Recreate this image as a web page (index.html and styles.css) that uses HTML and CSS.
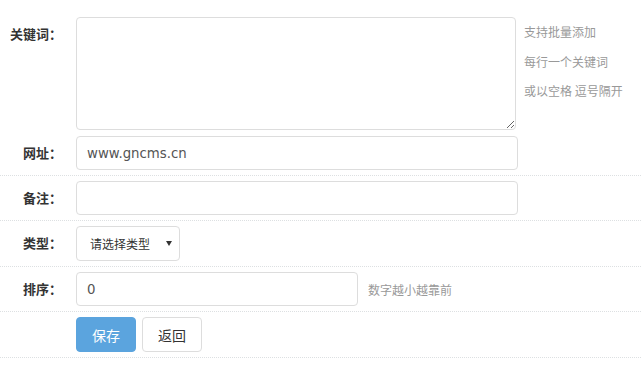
FILE: index.html
```html
<!DOCTYPE html>
<html lang="zh-CN">
<head>
  <meta charset="UTF-8">
  <title>添加关键词</title>
  <link rel="stylesheet" href="styles.css">
</head>
<body>
  <form class="form">
    <div class="row row-first">
      <label class="row-label">关键词：</label>
      <textarea class="field field-area"></textarea>
      <div class="help help-list">
        <p>支持批量添加</p>
        <p>每行一个关键词</p>
        <p>或以空格 逗号隔开</p>
      </div>
    </div>

    <div class="row">
      <label class="row-label">网址：</label>
      <input type="text" class="field field-wide" value="www.gncms.cn">
    </div>

    <div class="row">
      <label class="row-label">备注：</label>
      <input type="text" class="field field-wide">
    </div>

    <div class="row">
      <label class="row-label">类型：</label>
      <div class="select-box">
        <select class="field field-select">
          <option>请选择类型</option>
          <option>网站</option>
          <option>栏目</option>
        </select>
      </div>
    </div>

    <div class="row">
      <label class="row-label">排序：</label>
      <input type="text" class="field field-short" value="0">
      <span class="help">数字越小越靠前</span>
    </div>

    <div class="row">
      <span class="row-label"></span>
      <div class="actions">
        <button type="button" class="btn btn-primary">保存</button>
        <button type="button" class="btn btn-default">返回</button>
      </div>
    </div>
  </form>
</body>
</html>
```

FILE: styles.css
```css
body {
  margin: 0;
  padding: 0;
  background: #fff;
  font-family: "DejaVu Sans", "Noto Sans CJK SC", sans-serif;
  font-size: 13px;
  color: #333;
}
.form {
  margin: 0;
}
.row {
  display: flex;
  align-items: center;
  padding: 5px 0;
  border-bottom: 1px dotted #dde0e2;
}
.row-first {
  align-items: flex-start;
  padding: 17px 0 1px;
  border-bottom: none;
}
.row-label {
  flex: 0 0 62px;
  margin-right: 14px;
  text-align: right;
  font-family: "Noto Sans CJK SC", sans-serif;
  font-weight: bold;
  font-size: 13px;
  line-height: 30px;
  color: #333;
  align-self: flex-start;
  padding-top: 2px;
}
.field {
  box-sizing: border-box;
  height: 34px;
  padding: 0 10px;
  border: 1px solid #ddd;
  border-radius: 4px;
  background: #fff;
  font-family: "DejaVu Sans", "Noto Sans CJK SC", sans-serif;
  font-size: 13.3px;
  color: #555;
  outline: none;
}
.field-area {
  width: 440px;
  height: 113px;
  padding: 6px 10px;
  resize: both;
}
.field-wide {
  width: 442px;
}
.field-short {
  width: 282px;
}
.select-box {
  position: relative;
}
.select-box::after {
  content: "";
  position: absolute;
  right: 8px;
  top: 15px;
  border-left: 3px solid transparent;
  border-right: 3px solid transparent;
  border-top: 5px solid #333;
  pointer-events: none;
}
.field-select {
  -webkit-appearance: none;
  appearance: none;
  width: 104px;
  height: 35px;
  padding: 0 20px 0 13px;
  font-family: "Noto Sans CJK SC", sans-serif;
  font-size: 12px;
  color: #333;
}
.help {
  margin-left: 10px;
  font-family: "Noto Sans CJK SC", sans-serif;
  font-size: 12px;
  color: #999;
}
.help-list {
  margin-left: 8px;
}
.help-list p {
  margin: 0;
  line-height: 29.5px;
}
.actions {
  display: flex;
  gap: 6px;
}
.btn {
  box-sizing: border-box;
  height: 35px;
  padding: 0 15px;
  border: 1px solid #ddd;
  border-radius: 4px;
  font-family: "Noto Sans CJK SC", sans-serif;
  font-size: 14px;
  cursor: pointer;
}
.btn-primary {
  background-color: #5ba4de;
  border-color: #5ba4de;
  color: #fff;
}
.btn-default {
  background-color: #fff;
  color: #333;
}
```
